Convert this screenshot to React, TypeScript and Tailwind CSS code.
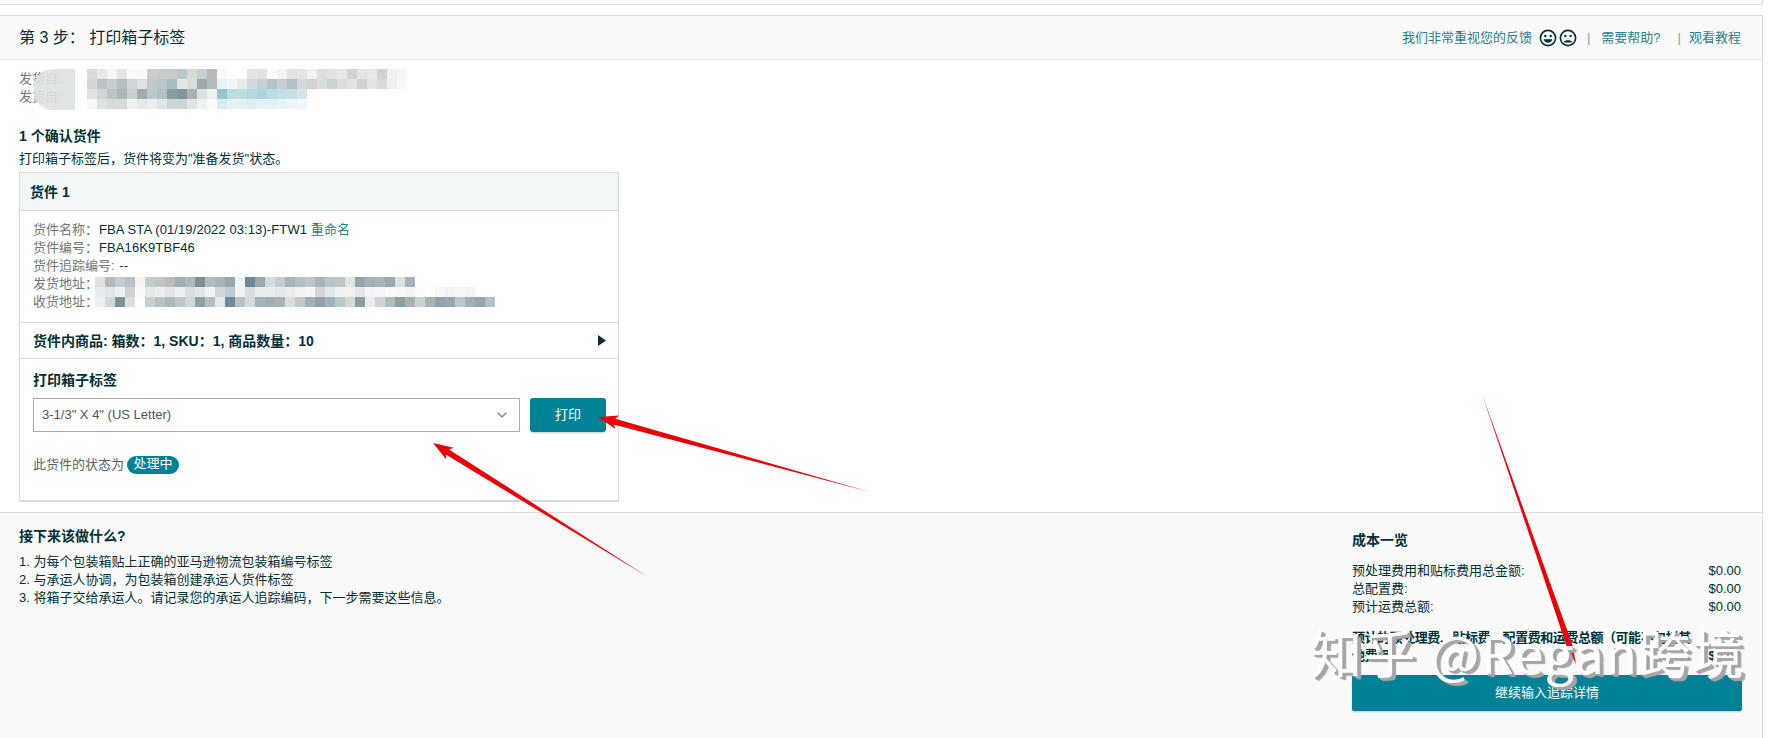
import { ChevronDown } from "lucide-react";

const font = "font-['Liberation_Sans','Noto_Sans_CJK_SC',sans-serif]";

// pixelated privacy blur, one string of hex shades per row
const topBlur = [
  "d9dcde e8eaea f4f5f5 e2e5e6 fafafa fafafa c9cdce c6cbcc c3ccce b9c6ca d9d8d4 c6d0d4 b4bcbe f8f9f9 ffffff ffffff e4e6e6 e0e2e3 fbfbfb f2f3f3 dfe2e3 e3e5e6 f0f0f0 dcdedf e2e2e2 e6e7e7 d0d3d1 e3e5e6 e6e7e7 d0d3d1 eef0f1 f4f6f7",
  "d3d7d9 bcc1c3 c6cdd2 b8bfc0 cfd6da dde1e4 c2c8c9 b9c6c8 a9bdc1 e3e6e2 d8dee0 9eabab b3bcbc e9eff2 f2f4f5 e8ebec d6d9d9 c9cfd2 b3c3cb c8cccb b4c0c5 d6d8d8 d0d3d2 dadddd c6d2d5 dcdfe0 e2e4e4 cdd4d6 e2e4e4 d8dcdd eef1f3 f6f8f9",
  "dfe2e3 d0d4d5 bcc4c7 adb8b9 c8ced1 a4adad b9c8d1 b6c0c1 8c9ea3 7f98a0 a9b3b4 dde2e4 eef1f2 94c6d4 bddde4 c0dde3 b4d9e3 aed4df b9dbe3 c0dfe6 c5e1e7 d0e7ec",
  "f7f7f7 dfe2e3 d8dbdc d5d9da eef0f1 e6e8e8 e9eef2 e0e4e6 cdd3d6 ced3d6 e0e3e5 eff2f3 fafbfb dcebf0 e8f2f5 e4f0f4 e0eef2 e6f1f4 e2eff3 e8f3f6 eef6f8 f2f8fa",
];
const addressBlur = [
  "dfe3e6 b5babd c2cbd0 b7c1c8 f4f4f4 c4cbcc c0c6c7 b9bfbf 9eb0b9 a9bdbb 7f8f94 adbfc4 a6b6b9 99a8ae f2f2f2 6f8a96 9aa9ab d0dce3 c8cbc8 a4b5bc b4bfc0 bcc7cb a9b5b7 b4c6cc bcc5c9 e2e5e6 94a4ad a4b0b5 a9b7b8 9aaab2 dbdfe0 a4b4ba",
  "e8eaec e2e5e7 edf0f1 cdd2d6 fafafa e5e8e9 ebedee e2e5e6 ecefef dcdfe1 e2e5e7 f2f3f3 cfd5d8 bfcad0 f0f1f1 d8dee1 eaeced eaedee e4e7e9 e9ebec f0f2f2 f5f6f6 d2d5d7 e4e6e8 eef0f1 f0f1f2 e4e7e8 f2f3f3 f4f5f5 fbfbfb f7f7f7 f2f3f3 fbfbfb fdfdfd f7f7f7 f2f2f2 f7f7f7 f2f3f3",
  "eceeef d5d8da 7e9199 dde0e1 ffffff c9d0d3 b9c3c7 adb9bd bcc8cc cfd7d9 8ea1a9 b4bfc3 e4e8ea 6f8a99 b7c3c7 d6dadc a4b4bb a3afb3 a9b4b8 d8dcdc c2c9ca a1b1b8 94a0a5 a1b3bc bdc8cd d8d8d4 8e9e9e e8eef0 d0d6d7 b2bcbf 8ea0a7 a9b2b0 c6d3da aab2ac 8fa3ae 9aa6ab b8c6cd a4b0b6 98a6ad b4c0c5",
];

function Blur({ rows, className }: { rows: string[]; className: string }) {
  return (
    <div className={`absolute ${className}`}>
      {rows.map((row, i) => (
        <div key={i} className="flex h-[10px]">
          {row.split(" ").map((c, j) => (
            <div key={j} className="w-[10px] shrink-0" style={{ backgroundColor: `#${c}` }} />
          ))}
        </div>
      ))}
    </div>
  );
}

function Arrow({ tip, tail, head = 7, neck = 3, len = 20 }: { tip: number[]; tail: number[]; head?: number; neck?: number; len?: number }) {
  const dx = tail[0] - tip[0];
  const dy = tail[1] - tip[1];
  const l = Math.hypot(dx, dy);
  const ux = dx / l;
  const uy = dy / l;
  const at = (d: number, s: number) => `${tip[0] + ux * d - uy * s},${tip[1] + uy * d + ux * s}`;
  const points = [at(0, 0), at(len, head), at(len - 3, neck), `${tail[0]},${tail[1]}`, at(len - 3, -neck), at(len, -head)].join(" ");
  return <polygon points={points} fill="#ec0008" />;
}

function Smiley({ sad }: { sad?: boolean }) {
  return (
    <svg width="18" height="18" viewBox="0 0 18 18" fill="none" stroke="#002f36" strokeWidth="1.6">
      <circle cx="9" cy="9" r="7.6" />
      <circle cx="6.3" cy="7" r="1.2" fill="#002f36" stroke="none" />
      <circle cx="11.7" cy="7" r="1.2" fill="#002f36" stroke="none" />
      {sad ? (
        <path d="M5.4 13c1-1.7 6.2-1.7 7.2 0z" fill="#002f36" strokeWidth="1" />
      ) : (
        <path d="M5 10.4h8c-.4 4-7.6 4-8 0z" fill="#002f36" strokeWidth="0.6" />
      )}
    </svg>
  );
}

function Detail({ label, children }: { label: string; children?: React.ReactNode }) {
  return (
    <div className="flex">
      <span className="text-[#6c7778]">{label}</span>
      <span className="pl-px tracking-[0.1px]">{children}</span>
    </div>
  );
}

function CostRow({ label, amount }: { label: string; amount: string }) {
  return (
    <div className="flex justify-between pr-px">
      <span>{label}</span>
      <span>{amount}</span>
    </div>
  );
}

export default function App() {
  return (
    <div className={`${font} relative h-[738px] w-[1792px] overflow-hidden bg-white text-[13px] leading-[18px] text-[#002f36]`}>
      <div className="h-[5px] w-[1763px] border-r border-b border-[#dcdfdf]" />
      <div className="mt-[10px] flex h-[723px] w-[1763px] flex-col border-t border-r border-[#dcdfdf]">
        <div className="flex h-[44px] shrink-0 items-center justify-between border-b border-[#e9ebeb] bg-[#fafafa] pr-[21px] pl-[19px]">
          <h1 className="text-[16px] font-normal">第 3 步： 打印箱子标签</h1>
          <div className="flex items-center text-[#2a7f8c]">
            <span>我们非常重视您的反馈</span>
            <span className="ml-[7px] flex gap-[2px]">
              <Smiley />
              <Smiley sad />
            </span>
            <span className="mr-[11px] ml-[10px] text-[#8a9596]">|</span>
            <span>需要帮助?</span>
            <span className="mr-[8px] ml-[17px] text-[#8a9596]">|</span>
            <span>观看教程</span>
          </div>
        </div>

        <div className="relative h-[452px] shrink-0 pt-[10px] pl-[19px]">
          <div className="text-[#6c7778]">发货自:</div>
          <div className="text-[#6c7778]">发货自:</div>
          <Blur rows={topBlur} className="top-[9px] left-[87px]" />
          <div className="absolute top-[9px] left-[33px] h-[41px] w-[42px] rounded-l-[20px] bg-[#dfe2e3] opacity-90" />

          <h2 className="mt-[21px] text-[14px] font-bold">1 个确认货件</h2>
          <p className="mt-[5px]">打印箱子标签后，货件将变为"准备发货"状态。</p>

          <div className="mt-[4px] w-[600px] border border-b-2 border-[#d5dbdb]">
            <div className="flex h-[38px] items-center border-b border-[#d5dbdb] bg-[#f3f6f6] pl-[10px] text-[14px] font-bold">货件 1</div>

            <div className="relative border-b border-[#d5dbdb] pt-[10px] pb-[11px] pl-[13px]">
              <Detail label="货件名称：">
                FBA STA (01/19/2022 03:13)-FTW1 <span className="text-[#2a7f8c]">重命名</span>
              </Detail>
              <Detail label="货件编号：">FBA16K9TBF46</Detail>
              <Detail label="货件追踪编号:">&nbsp;--</Detail>
              <Detail label="发货地址：" />
              <Detail label="收货地址：" />
              <Blur rows={addressBlur} className="top-[66px] left-[75px]" />
            </div>

            <div className="flex h-[36px] items-center justify-between border-b border-[#d5dbdb] pr-[12px] pl-[13px] text-[14px] font-bold">
              <span>货件内商品: 箱数：1, SKU：1, 商品数量：10</span>
              <svg width="8" height="11" viewBox="0 0 8 11">
                <path d="M0 0l8 5.5L0 11z" fill="#002f36" />
              </svg>
            </div>

            <div className="h-[141px] pt-[12px] pr-[12px] pl-[13px]">
              <div className="text-[14px] font-bold">打印箱子标签</div>
              <div className="mt-[9px] flex gap-[10px]">
                <div className="flex h-[34px] flex-1 items-center justify-between border border-[#a6adad] pr-[9px] pl-[8px] text-[#4a5556]">
                  <span>3-1/3" X 4" (US Letter)</span>
                  <ChevronDown className="size-[16px] text-[#7c8788]" strokeWidth={2} />
                </div>
                <button className="h-[34px] w-[76px] rounded-[3px] bg-[#008296] text-white shadow-[0_1px_2px_rgba(0,0,0,0.2)]">打印</button>
              </div>
              <div className="mt-[24px] flex items-center gap-[3px]">
                <span className="text-[#566364]">此货件的状态为</span>
                <span className="flex h-[18px] w-[52px] items-center justify-center rounded-full bg-[#008296] pb-[2px] text-white">处理中</span>
              </div>
            </div>
          </div>
        </div>

        <div className="flex flex-1 justify-between border-t border-[#dcdfdf] bg-[#fafafa] pr-[20px] pl-[19px]">
          <div className="pt-[14px]">
            <h2 className="text-[14px] font-bold">接下来该做什么?</h2>
            <ol className="mt-[8px]">
              <li>1. 为每个包装箱贴上正确的亚马逊物流包装箱编号标签</li>
              <li>2. 与承运人协调，为包装箱创建承运人货件标签</li>
              <li>3. 将箱子交给承运人。请记录您的承运人追踪编码，下一步需要这些信息。</li>
            </ol>
          </div>
          <div className="w-[390px] pt-[18px]">
            <h2 className="text-[14px] font-bold">成本一览</h2>
            <div className="mt-[13px]">
              <CostRow label="预处理费用和贴标费用总金额:" amount="$0.00" />
              <CostRow label="总配置费:" amount="$0.00" />
              <CostRow label="预计运费总额:" amount="$0.00" />
            </div>
            <div className="mt-[13px] flex items-end justify-between pr-px font-bold">
              <span className="w-[346px] tracking-[-0.45px]">
                预计的预处理费、贴标费、配置费和运费总额（可能不包括其
                <br />
                他费用）:
              </span>
              <span>$0.00</span>
            </div>
            <button className="mt-[10px] h-[36px] w-full rounded-[2px] bg-[#008296] text-white shadow-[0_1px_2px_rgba(0,0,0,0.2)]">继续输入追踪详情</button>
          </div>
        </div>
      </div>

      {/* annotations drawn on top of the screenshot */}
      <svg className="absolute top-0 left-0" width="1792" height="738">
        <Arrow tip={[598, 417]} tail={[870, 492]} />
        <Arrow tip={[433, 443]} tail={[648, 577]} />
        <Arrow tip={[1576, 664]} tail={[1482, 394]} head={3} neck={3} />
      </svg>
      <div className="absolute top-[617px] left-[1310px] font-['Noto_Sans_CJK_SC',sans-serif] text-[52px] leading-[70px] tracking-[1.5px] whitespace-nowrap text-white [text-shadow:2px_2px_0_#a6a6a6,4px_3px_1px_#a6a6a6]">知乎 @Regan跨境</div>
    </div>
  );
}
